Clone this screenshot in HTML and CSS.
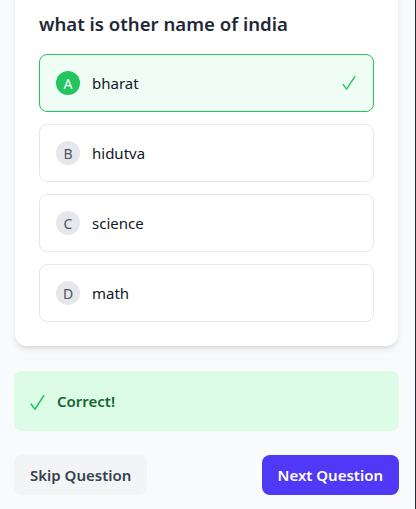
FILE: index.html
```html
<!DOCTYPE html>
<html>
<head>
<meta charset="utf-8">
<link rel="stylesheet" href="styles.css">
</head>
<body>
<div class="page">
  <div class="wrap">
    <section class="card">
      <h2 class="question">what is other name of india</h2>
      <div class="options">
        <div class="option correct">
          <span class="badge">A</span>
          <span class="label">bharat</span>
          <svg class="tick" width="14" height="16" viewBox="0 0 14 16" aria-hidden="true"><path d="M1.2 9.6 L4.6 14.2 L12.8 1.6" fill="none" stroke="#22c55e" stroke-width="1.4" stroke-linecap="round" stroke-linejoin="round"/></svg>
        </div>
        <div class="option">
          <span class="badge">B</span>
          <span class="label">hidutva</span>
        </div>
        <div class="option">
          <span class="badge">C</span>
          <span class="label">science</span>
        </div>
        <div class="option">
          <span class="badge">D</span>
          <span class="label">math</span>
        </div>
      </div>
    </section>
    <div class="feedback">
      <svg class="fb-tick" width="15" height="17" viewBox="0 0 15 17" aria-hidden="true"><path d="M1.2 10.2 L5 15.2 L13.8 1.6" fill="none" stroke="#22c55e" stroke-width="1.6" stroke-linecap="round" stroke-linejoin="round"/></svg>
      <span class="fb-text">Correct!</span>
    </div>
    <div class="actions">
      <button class="btn skip">Skip Question</button>
      <button class="btn next">Next Question</button>
    </div>
  </div>
</div>
</body>
</html>
```
FILE: styles.css
```css
html, body {
  margin: 0;
  padding: 0;
  background: #f9fafb;
}
body {
  font-family: "Noto Sans", "Open Sans", sans-serif;
  color: #111827;
}
.page {
  min-height: 100vh;
  border-right: 1px solid #1f2937;
  box-sizing: border-box;
  overflow: hidden;
}
.wrap {
  width: 385px;
  margin-left: 14px;
  display: flex;
  flex-direction: column;
  gap: 24px;
}
.card {
  background: #fff;
  border-radius: 12px;
  box-shadow: 0 4px 6px -1px rgba(0,0,0,0.1), 0 2px 4px -2px rgba(0,0,0,0.1);
  padding: 24px;
  margin: -14px 1px 1px;
}
.question {
  margin: 0 0 16px;
  font-size: 18.6px;
  line-height: 28px;
  font-weight: 600;
  color: #1f2937;
}
.options {
  display: flex;
  flex-direction: column;
  gap: 12px;
}
.option {
  height: 58px;
  box-sizing: border-box;
  border: 1px solid #e5e7eb;
  border-radius: 8px;
  background: #fff;
  display: flex;
  align-items: center;
  padding: 0 16px;
  gap: 12px;
}
.option.correct {
  border-color: #22c55e;
  background: #f0fdf4;
}
.badge {
  width: 24px;
  height: 24px;
  border-radius: 50%;
  background: #e5e7eb;
  color: #4b5563;
  font-size: 14px;
  display: flex;
  align-items: center;
  justify-content: center;
  flex: none;
}
.correct .badge {
  background: #22c55e;
  color: #fff;
}
.label {
  font-size: 15px;
  flex: 1;
}
.tick {
  display: block;
  flex: none;
  margin-right: 1px;
}
.feedback {
  background: #dcfce7;
  border-radius: 8px;
  height: 60px;
  box-sizing: border-box;
  padding: 0 16px;
  display: flex;
  align-items: center;
  gap: 12px;
}
.fb-tick {
  display: block;
  flex: none;
  margin-top: 2px;
}
.fb-text {
  color: #166534;
  font-weight: 600;
  font-size: 15px;
}
.actions {
  display: flex;
  justify-content: space-between;
}
.btn {
  font-family: inherit;
  border: none;
  border-radius: 8px;
  height: 40px;
  padding: 0 16px;
  font-size: 15px;
  font-weight: 600;
}
.skip {
  background: #f3f4f6;
  color: #374151;
}
.next {
  background: #4f39f6;
  color: #fff;
}
```
